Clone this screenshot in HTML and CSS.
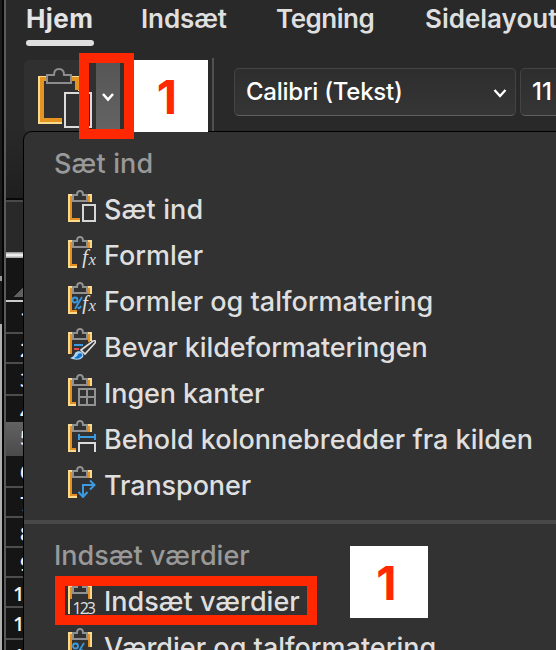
FILE: index.html
```html
<!DOCTYPE html>
<html lang="da">
<head>
<meta charset="utf-8">
<title>Sæt ind</title>
<link rel="stylesheet" href="styles.css">
</head>
<body>
<svg class="defs" aria-hidden="true">
  <symbol id="clip" viewBox="0 0 28 32">
    <path d="M4 4h16v8H4z" fill="#323232"/>
    <path d="M5 11V5h4C9 2.500 10.200 1 12 1s3 1.500 3 4h4v6z" fill="#323232" stroke="#919191" stroke-width="2"/>
  </symbol>
  <symbol id="board" viewBox="0 0 28 32">
    <path d="M5 5H1v26h8" fill="none" stroke="#fbd98d" stroke-width="2"/>
    <path d="M3 6v23h6M21 6v6" fill="none" stroke="#e38f22" stroke-width="2"/>
    <path d="M19 5h4v7" fill="none" stroke="#fbd98d" stroke-width="2"/>
    <use href="#clip"/>
  </symbol>
</svg>
<div class="screen">
  <div class="behind"><div class="behind-dark"></div><div class="behind-light"></div></div>
  <main class="window">
    <nav class="tabs">
      <span class="tab active">Hjem</span><span class="tab t2">Indsæt</span><span class="tab t3">Tegning</span><span class="tab t4">Sidelayout</span>
    </nav>
    <div class="ribbon">
      <div class="paste">
        <svg class="paste-icon" viewBox="0 0 54 60">
          <path d="M10 9H1v46h23M32 9h9v14" fill="none" stroke="#fbd98d" stroke-width="2"/>
          <path d="M10 11H4v41h20M32 11h7v11" fill="none" stroke="#e5941f" stroke-width="4"/>
          <path d="M9 15V7h7c0-4 2-6 5-6s5 2 5 6h7v8z" fill="#303030" stroke="#8d8d8d" stroke-width="2"/>
          <path d="M27 25h26v34H27z" fill="#303030" stroke="#dcdcdc" stroke-width="2"/>
        </svg>
        <div class="paste-arrow"><svg viewBox="0 0 14 10"><path d="M2 2l5 5.500L12 2" fill="none" stroke="#fff" stroke-width="2.600"/></svg></div>
      </div>
      <div class="divider"></div>
      <div class="font"><span>Calibri (Tekst)</span><svg viewBox="0 0 14 10"><path d="M1.500 2L7 8l5.500-6" fill="none" stroke="#fff" stroke-width="2.300"/></svg></div>
      <div class="size">11</div>
    </div>
    <div class="formula"></div>
    <div class="sheet">
      <div class="corner"></div>
      <div class="row r1">1</div><div class="row r2">2</div><div class="row r3">3</div><div class="row r4">4</div><div class="row r5">5</div><div class="row r6">6</div><div class="row r7">7</div><div class="row r8">8</div><div class="row r9">9</div><div class="row r10">10</div><div class="row r11">11</div><div class="row r12">12</div>
    </div>
  </main>

  <section class="menu">
    <div class="head h1">Sæt ind</div>
    <div class="item i1"><svg viewBox="0 0 28 32"><path d="M9 31h3" stroke="#fbd98d" stroke-width="2"/><path d="M9 29h3" stroke="#e38f22" stroke-width="2"/><use href="#board"/><path d="M15 15h12v16H15z" fill="#323232" stroke="#d6d6d6" stroke-width="2"/></svg><span>Sæt ind</span></div>
    <div class="item i2"><svg viewBox="0 0 28 32"><use href="#board"/><text class="fx" x="14" y="28">f</text><text class="fx x" x="20.500" y="29">x</text></svg><span>Formler</span></div>
    <div class="item i3"><svg viewBox="0 0 28 32"><use href="#board"/><circle cx="7" cy="18" r="2.500" fill="#323232" stroke="#3c9be0" stroke-width="1.800"/><path d="M14 15L7 27M10 25q1 3 3-1" fill="none" stroke="#3c9be0" stroke-width="1.700"/><text class="fx" x="14" y="28">f</text><text class="fx x" x="20.500" y="29">x</text></svg><span>Formler og talformatering</span></div>
    <div class="item i4"><svg viewBox="0 0 28 32"><path d="M5 5H1v21M19 5h4v8" fill="none" stroke="#fbd98d" stroke-width="2"/><path d="M3 6v20M21 6v8" stroke="#e38f22" stroke-width="2"/><use href="#clip"/><path d="M6 17h9" stroke="#3c9be0" stroke-width="2"/><path d="M6 21h5" stroke="#e64b4b" stroke-width="2"/><path d="M13 22L25 13q4-1 2 2L17 26z" fill="#323232" stroke="#dedede" stroke-width="1.600"/><path d="M2 30q4-1 5-5c3-4 10-1 8 4-3 4-9 3-13 1z" fill="#a8d4f6"/><path d="M6 30q4-2 4-4c3-2 6 1 3 3q-3 3-7 1z" fill="#1473c8"/></svg><span>Bevar kildeformateringen</span></div>
    <div class="item i5"><svg viewBox="0 0 28 32"><use href="#board"/><path d="M8 12h20v20H8z" fill="#323232"/><path d="M11 15h16v16H11zM19 15v16M11 23h16" fill="none" stroke="#929292" stroke-width="2"/></svg><span>Ingen kanter</span></div>
    <div class="item i6"><svg viewBox="0 0 28 32"><use href="#board"/><path d="M8 14h20v18H8z" fill="#323232"/><path d="M11 14v6M27 14v6M11 17h16" stroke="#3c9be0" stroke-width="2"/><path d="M11 32v-9h16v9" fill="none" stroke="#dcdcdc" stroke-width="2"/></svg><span>Behold kolonnebredder fra kilden</span></div>
    <div class="item i7"><svg viewBox="0 0 28 32"><use href="#board"/><path d="M15 30V19h11M10.500 26l4.500 5 4.500-5M22 14.500l4.500 4.500-4.500 4.500" fill="none" stroke="#3c9be0" stroke-width="2"/></svg><span>Transponer</span></div>
    <div class="separator"></div>
    <div class="head h2">Indsæt værdier</div>
    <div class="item i8"><svg viewBox="0 0 28 32"><path d="M5 5H1v27M19 5h4v12" fill="none" stroke="#fbd98d" stroke-width="2"/><path d="M3 5v12M21 5v12" stroke="#e38f22" stroke-width="2"/><use href="#clip"/><text class="digits" x="4.500" y="31.500" textLength="23.500">123</text></svg><span>Indsæt værdier</span></div>
    <div class="item i9"><svg viewBox="0 0 28 32"><path d="M5 5H1v26h8M19 5h4v14" fill="none" stroke="#fbd98d" stroke-width="2"/><path d="M3 6v23M21 6v13" stroke="#e38f22" stroke-width="2"/><use href="#clip"/><circle cx="7.500" cy="18" r="2.500" fill="none" stroke="#3c9be0" stroke-width="1.800"/><path d="M16 15L8 28M12 23q3-2 4 1" fill="none" stroke="#3c9be0" stroke-width="1.700"/></svg><span>Værdier og talformatering</span></div>
  </section>

  <div class="frame frame-top"></div>
  <div class="note note-top">1</div>
  <div class="frame frame-bottom"></div>
  <div class="note note-bottom">1</div>
</div>
</body>
</html>
```
FILE: styles.css
```css
* { box-sizing: border-box; }
body { margin: 0; background: #292929; }
.defs { position: absolute; width: 0; height: 0; }
.screen { position: relative; display: flex; width: 556px; height: 650px; overflow: hidden; font-family: Inter, "Liberation Sans", sans-serif; color: #dfdfdf; white-space: nowrap; }
.behind { flex: none; width: 4px; border-right: 2px solid #050505; }
.behind-dark { height: 324px; background: linear-gradient(#999, #999) 0 276px / 2px 5px no-repeat #1b1b1b; }
.behind-light { height: 326px; background: #b0b0b0; }
.window { flex: none; width: 552px; border-left: 2px solid #5a5a5a; background: #292929; }
.tabs { display: flex; height: 58px; padding-left: 20px; font-size: 26px; font-weight: 600; line-height: 38px; }
.tab { flex: none; height: 46px; }
.active { position: relative; width: 68px; color: #e4e4e4; font-weight: 700; letter-spacing: 0.4px; }
.active::after { content: ""; position: absolute; left: 0; bottom: 0; width: 68px; height: 6px; border-radius: 3px; background: #dfdfdf; }
.t2 { margin-left: 47px; width: 89px; letter-spacing: -0.1px; }
.t3 { margin-left: 46px; width: 102px; letter-spacing: -0.5px; }
.t4 { margin-left: 47px; }
.ribbon { display: flex; height: 140px; padding-left: 18px; background: linear-gradient(#292929, #292929 70px, #1f1f1f); }
.paste { display: flex; flex: none; width: 110px; height: 72px; margin-top: 2px; padding: 8px 0 0 14px; border-radius: 5px; background: #303030; }
.paste-icon { flex: none; width: 54px; height: 60px; }
.paste-arrow { display: flex; align-items: center; justify-content: center; width: 24px; height: 72px; margin: -8px 0 0 4px; background: linear-gradient(#555, #646464); }
.paste-arrow svg { width: 14px; height: 10px; margin-top: 1px; }
.divider { flex: none; width: 2px; height: 74px; margin-left: 78px; background: #505050; }
.font, .size { display: flex; align-items: center; flex: none; height: 48px; margin-top: 10px; border: 1px solid #444; border-bottom-color: #606060; border-radius: 5px; background: linear-gradient(#2e2e2e, #353535); color: #fff; font-size: 24px; font-weight: 450; padding: 0 8px 2px 11px; }
.font { justify-content: space-between; width: 282px; margin-left: 20px; letter-spacing: -0.25px; }
.font svg { width: 14px; height: 10px; margin-top: 3px; }
.size { width: 80px; margin-left: 4px; }
.formula { height: 60px; border-top: 2px solid #080808; background: linear-gradient(#8a8a8a, #fff 50%, #999) bottom / 100% 6px no-repeat #292929; box-shadow: inset 0 2px #494949; }
.sheet { background: #151515; color: #f2f2f2; font-family: "Open Sans", sans-serif; font-size: 20px; font-weight: 600; }
.corner { height: 44px; border-bottom: 2px solid #ccc; background: linear-gradient(135deg, transparent 50%, #606060 50%) 8px 28px / 11px 11px no-repeat; }
.row { width: 40px; height: 30px; padding-left: 14px; border-bottom: 2px solid #4d4d4d; line-height: 31px; }
.r1, .r3, .r6, .r11 { height: 32px; }
.r4 { height: 26px; border: 0; }
.r5 { height: 34px; border: 0; background: linear-gradient(#626262, #4a4a4a); }
.r10, .r11, .r12 { padding-left: 7px; }
.menu { position: absolute; left: 23px; top: 131px; width: 560px; height: 540px; border: 1px solid #000; border-radius: 9px 0 0 0; padding-top: 8px; background: #323232; font-size: 27px; font-weight: 450; }
.head { height: 46px; padding-left: 30px; color: #999; line-height: 48px; }
.item { display: flex; height: 46px; padding-left: 44px; line-height: 48px; }
.item svg { flex: none; width: 28px; height: 32px; margin: 4px 8px 0 0; }
.h1, .i1 { letter-spacing: 0.15px; }
.i4, .i5, .i7 { letter-spacing: -0.1px; }
.separator { height: 4px; margin: 12px 0 8px; background: #484848; }
.fx { fill: #dcdcdc; font: italic 21px "Liberation Serif", serif; }
.fx.x { font-size: 17px; }
.digits { fill: #e0e0e0; font: 16px "Open Sans", sans-serif; }
.frame { position: absolute; border: 10px solid #ff2800; }
.frame-top { left: 79px; top: 53px; width: 55px; height: 86px; }
.frame-bottom { left: 55px; top: 576px; width: 262px; height: 49px; }
.note { position: absolute; display: flex; align-items: center; justify-content: center; padding: 0 8px 0 0; background: #fff; color: #ff2800; font: bold 47px Inter, "Liberation Sans", sans-serif; }
.note-top { left: 134px; top: 60px; width: 74px; height: 72px; }
.note-bottom { left: 350px; top: 546px; width: 78px; height: 72px; padding-right: 5px; }
```
